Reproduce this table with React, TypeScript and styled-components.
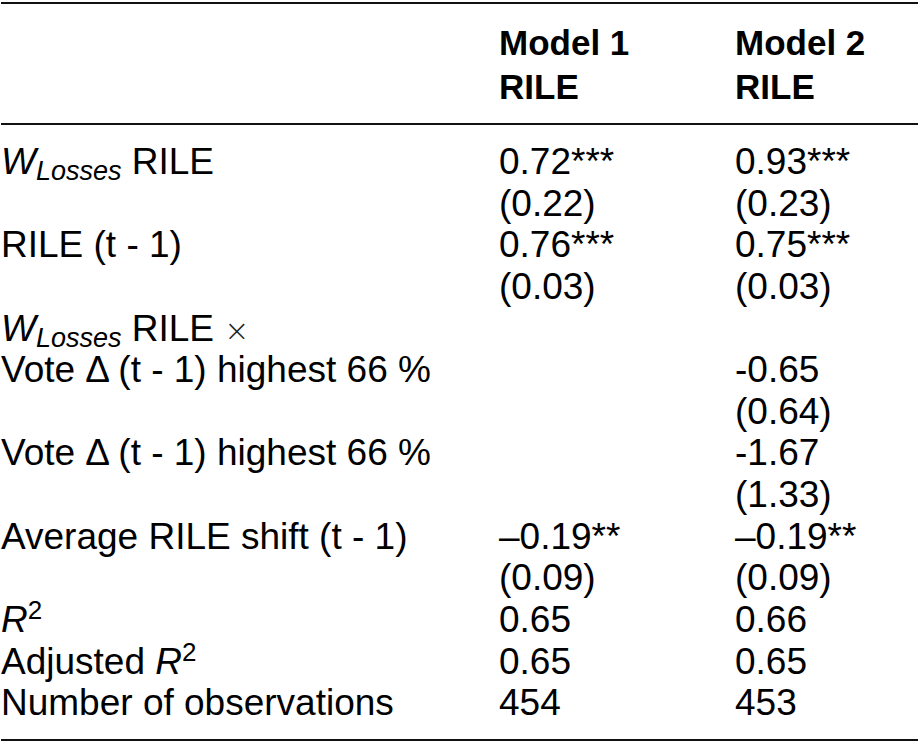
import React from 'react';
import styled, { createGlobalStyle } from 'styled-components';

const LINE = 41.65;

const GlobalStyle = createGlobalStyle`
  html, body {
    margin: 0;
    padding: 0;
    background: #ffffff;
  }
  body {
    font-family: "Liberation Sans", Arial, Helvetica, sans-serif;
    color: #000000;
  }
`;

const Table = styled.div`
  margin: 2px 0 0 1px;
  width: 917px;
  border-top: 2px solid #111;
  border-bottom: 2px solid #111;
`;

const Head = styled.div`
  display: grid;
  grid-template-columns: 498px 236px 1fr;
  padding: 17px 0 14px;
  border-bottom: 2px solid #111;
`;

const HeadCell = styled.div`
  display: flex;
  flex-direction: column;
`;

const HeadLine = styled.div`
  font-size: 35px;
  font-weight: 700;
  line-height: 44px;
  white-space: nowrap;
`;

const Body = styled.div`
  display: grid;
  grid-template-columns: 498px 236px 1fr;
  padding: 16px 0 15px;
`;

const Cell = styled.div<{ $shift?: number }>`
  display: flex;
  flex-direction: column;
  padding-top: ${(p) => (p.$shift ? p.$shift * LINE : 0)}px;
`;

const Line = styled.div`
  font-size: 37px;
  line-height: ${LINE}px;
  height: ${LINE}px;
  white-space: nowrap;
`;

const Ital = styled.i`
  font-style: italic;
`;

const Sub = styled.i`
  font-style: italic;
  font-size: 27px;
  position: relative;
  top: 6px;
  line-height: 0;
`;

const Sup = styled.span`
  font-size: 26px;
  position: relative;
  top: -13px;
  line-height: 0;
`;

const Times = styled.span`
  font-family: "DejaVu Sans", sans-serif;
  font-weight: 200;
  font-size: 30px;
  color: #222;
`;

type Row = {
  label: React.ReactNode[];
  m1: string[];
  m2: string[];
  shift?: number;
};

const WLosses = () => (
  <>
    <Ital>W</Ital>
    <Sub>Losses</Sub>
  </>
);

const RSquared = () => (
  <>
    <Ital>R</Ital>
    <Sup>2</Sup>
  </>
);

const rows: Row[] = [
  {
    label: [<><WLosses /> RILE</>],
    m1: ['0.72***', '(0.22)'],
    m2: ['0.93***', '(0.23)'],
  },
  {
    label: ['RILE (t - 1)'],
    m1: ['0.76***', '(0.03)'],
    m2: ['0.75***', '(0.03)'],
  },
  {
    label: [<><WLosses /> RILE <Times>×</Times></>, 'Vote Δ (t - 1) highest 66 %'],
    m1: [],
    m2: ['-0.65', '(0.64)'],
    shift: 1,
  },
  {
    label: ['Vote Δ (t - 1) highest 66 %'],
    m1: [],
    m2: ['-1.67', '(1.33)'],
  },
  {
    label: ['Average RILE shift (t - 1)'],
    m1: ['–0.19**', '(0.09)'],
    m2: ['–0.19**', '(0.09)'],
  },
  {
    label: [<RSquared />],
    m1: ['0.65'],
    m2: ['0.66'],
  },
  {
    label: [<>Adjusted <RSquared /></>],
    m1: ['0.65'],
    m2: ['0.65'],
  },
  {
    label: ['Number of observations'],
    m1: ['454'],
    m2: ['453'],
  },
];

export default function App() {
  return (
    <>
      <GlobalStyle />
      <Table>
        <Head>
          <span />
          <HeadCell>
            <HeadLine>Model 1</HeadLine>
            <HeadLine>RILE</HeadLine>
          </HeadCell>
          <HeadCell>
            <HeadLine>Model 2</HeadLine>
            <HeadLine>RILE</HeadLine>
          </HeadCell>
        </Head>
        <Body>
          {rows.map((row, i) => (
            <React.Fragment key={i}>
              <Cell>
                {row.label.map((l, j) => (
                  <Line key={j}>{l}</Line>
                ))}
              </Cell>
              <Cell $shift={row.shift}>
                {row.m1.map((v, j) => (
                  <Line key={j}>{v}</Line>
                ))}
              </Cell>
              <Cell $shift={row.shift}>
                {row.m2.map((v, j) => (
                  <Line key={j}>{v}</Line>
                ))}
              </Cell>
            </React.Fragment>
          ))}
        </Body>
      </Table>
    </>
  );
}
